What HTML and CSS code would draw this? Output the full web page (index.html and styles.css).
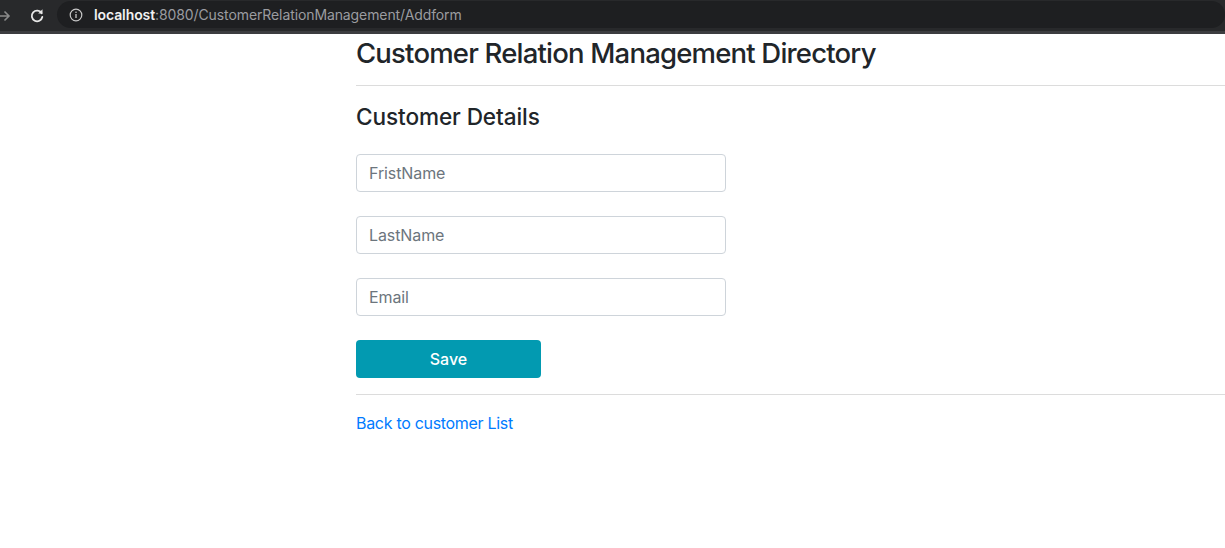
FILE: index.html
```html
<!DOCTYPE html>
<html lang="en">
<head>
<meta charset="utf-8">
<title>Customer Relation Management</title>
<link rel="stylesheet" href="styles.css">
</head>
<body>
<header class="chrome">
  <span class="nav-icon fwd">
    <svg width="14" height="14" viewBox="0 0 14 14"><path d="M0 7h11M6.5 2.5L11 7l-4.5 4.5" fill="none" stroke="#8a8a8a" stroke-width="1.6"/></svg>
  </span>
  <span class="nav-icon reload">
    <svg width="16" height="16" viewBox="0 0 16 16"><path d="M12.6 5.2A5.3 5.3 0 1 0 13.3 9" fill="none" stroke="#e8e8e8" stroke-width="1.8" stroke-linecap="round"/><path d="M9.2 5.6h4.3V1.3z" fill="#e8e8e8"/></svg>
  </span>
  <div class="omnibox">
    <svg class="info" width="14" height="14" viewBox="0 0 14 14"><circle cx="7" cy="7" r="5.8" fill="none" stroke="#c8c8c8" stroke-width="1.2"/><rect x="6.35" y="6" width="1.3" height="4" fill="#c8c8c8"/><circle cx="7" cy="4.3" r="0.8" fill="#c8c8c8"/></svg>
    <span class="url"><span class="host">localhost</span>:8080/CustomerRelationManagement/Addform</span>
  </div>
</header>
<main class="page">
  <h1 class="title">Customer Relation Management Directory</h1>
  <hr class="rule">
  <h2 class="subtitle">Customer Details</h2>
  <form class="form">
    <input class="field" type="text" placeholder="FristName">
    <input class="field" type="text" placeholder="LastName">
    <input class="field" type="text" placeholder="Email">
    <button class="btn-save" type="button">Save</button>
  </form>
  <hr class="rule rule-bottom">
  <a class="back" href="#">Back to customer List</a>
</main>
</body>
</html>
```
FILE: styles.css
```css
* { box-sizing: border-box; }
html, body { margin: 0; padding: 0; background: #fff; }
body {
  font-family: "Inter", "Liberation Sans", sans-serif;
  color: #212529;
  overflow: hidden;
}
.chrome {
  height: 34px;
  background: #28292b;
  border-bottom: 3px solid #3c3d40;
  display: flex;
  align-items: center;
}
.nav-icon { display: flex; align-items: center; }
.fwd { margin-left: -2px; width: 31px; }
.reload { width: 28px; }
.omnibox {
  height: 27px;
  margin-top: -2px;
  flex: 1;
  background: #1e1f21;
  border-radius: 14px;
  display: flex;
  align-items: center;
  padding-left: 12px;
}
.info { margin-right: 11px; }
.url {
  font-family: "Inter", "Liberation Sans", sans-serif;
  font-size: 14px;
  color: #9b9ca0;
  letter-spacing: -0.1px;
}
.host { color: #f1f1f1; font-weight: 600; }
.page {
  padding-left: 356px;
}
.title {
  font-size: 27.5px;
  font-weight: 500;
  line-height: 36px;
  margin: 1px 0 0 0;
  letter-spacing: -0.8px;
}
.rule {
  border: 0;
  border-top: 1px solid #dcdcdc;
  margin: 14px 0 0 0;
}
.subtitle {
  font-size: 22.6px;
  font-weight: 500;
  line-height: 28px;
  margin: 17px 0 0 0;
  letter-spacing: -0.1px;
}
.form {
  display: flex;
  flex-direction: column;
  align-items: flex-start;
  gap: 24px;
  margin-top: 23px;
}
.field {
  width: 370px;
  height: 38px;
  border: 1px solid #ced4da;
  border-radius: 4px;
  padding: 0 12px;
  font-family: inherit;
  font-size: 16px;
  color: #495057;
  letter-spacing: -0.1px;
}
.field::placeholder { color: #6c757d; }
.btn-save {
  width: 185px;
  height: 38px;
  border: 0;
  border-radius: 4px;
  background: #029ab1;
  color: #fff;
  font-family: inherit;
  font-size: 16px;
  font-weight: 500;
}
.rule-bottom { margin-top: 16px; }
.back {
  display: inline-block;
  margin-top: 18px;
  color: #007bff;
  text-decoration: none;
  font-size: 16px;
  letter-spacing: -0.3px;
}
```
